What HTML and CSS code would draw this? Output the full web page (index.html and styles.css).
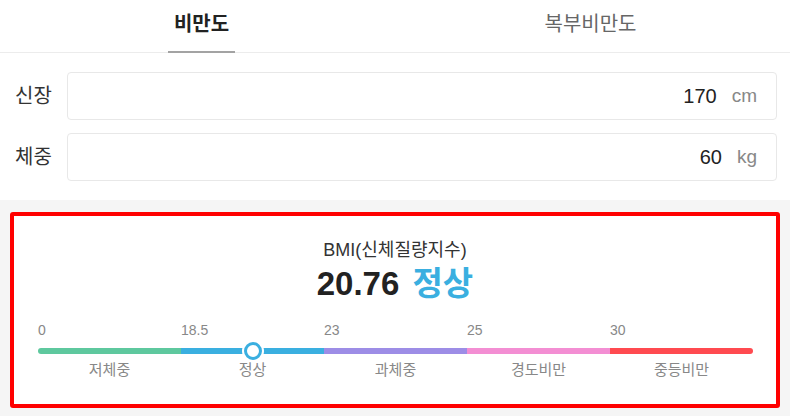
FILE: index.html
```html
<!DOCTYPE html>
<html lang="ko">
<head>
  <meta charset="UTF-8">
  <title>비만도 계산기</title>
  <link rel="stylesheet" href="styles.css">
</head>
<body>
  <div class="tabs">
    <div class="tab active"><span>비만도</span></div>
    <div class="tab"><span>복부비만도</span></div>
  </div>

  <div class="form">
    <div class="field">
      <label for="height">신장</label>
      <div class="input-box">
        <span class="value" id="height">170</span>
        <span class="unit">cm</span>
      </div>
    </div>
    <div class="field">
      <label for="weight">체중</label>
      <div class="input-box">
        <span class="value" id="weight">60</span>
        <span class="unit">kg</span>
      </div>
    </div>
  </div>

  <div class="result-area">
    <div class="result-card">
      <div class="result-title">BMI(신체질량지수)</div>
      <div class="result-value">20.76 <span class="grade">정상</span></div>

      <div class="scale">
        <div class="ticks">
          <span>0</span>
          <span>18.5</span>
          <span>23</span>
          <span>25</span>
          <span>30</span>
        </div>
        <div class="bar">
          <div class="seg under"></div>
          <div class="seg normal"></div>
          <div class="seg over"></div>
          <div class="seg obese1"></div>
          <div class="seg obese2"></div>
          <!-- marker: 20.76 → (1 + 2.26/4.5) / 5 -->
          <div class="marker" style="left: 30.04%"></div>
        </div>
        <div class="grades">
          <span>저체중</span>
          <span>정상</span>
          <span>과체중</span>
          <span>경도비만</span>
          <span>중등비만</span>
        </div>
      </div>
    </div>
  </div>
</body>
</html>
```

FILE: styles.css
```css
body {
  margin: 0;
  font-family: "Liberation Sans", "Noto Sans CJK KR", sans-serif;
  color: #333;
  background: #fff;
  width: 790px;
  height: 416px;
  overflow: hidden;
}

/* TABS */
.tabs {
  display: flex;
  height: 52px;
  border-bottom: 1px solid #ececec;
  padding: 0 5px 0 7px;
}

.tab {
  flex: 1;
  display: flex;
  justify-content: center;
}

.tab span {
  display: block;
  padding: 0 6px;
  font-size: 20px;
  line-height: 49px;
  color: #666;
  border-bottom: 2px solid transparent;
  margin-bottom: -1px;
  white-space: nowrap;
}

.tab.active span {
  color: #222;
  font-weight: bold;
  border-bottom-color: #a3a3a3;
}

/* FORM */
.form {
  padding: 19px 13px 19px 15px;
  display: flex;
  flex-direction: column;
  gap: 13px;
}

.field {
  display: flex;
  align-items: center;
  gap: 12px;
}

.field label {
  flex: 0 0 40px;
  white-space: nowrap;
  font-size: 20px;
  line-height: 24px;
  color: #333;
}

.input-box {
  flex: 1;
  height: 46px;
  border: 1px solid #e8e8e8;
  border-radius: 4px;
  display: flex;
  align-items: center;
  justify-content: flex-end;
  gap: 15px;
  padding-right: 19px;
}

.input-box .value {
  font-size: 20px;
  color: #222;
}

.input-box .unit {
  font-size: 19px;
  color: #888;
}

/* RESULT */
.result-area {
  background: #f5f5f5;
  padding: 12px 10px 8px;
}

.result-card {
  background: #fff;
  border: 4px solid #ff0000;
  border-radius: 3px;
  padding: 22px 0 24px;
  text-align: center;
}

.result-title {
  font-size: 18px;
  line-height: 24px;
  color: #333;
}

.result-value {
  margin-top: 2px;
  font-size: 33px;
  line-height: 40px;
  font-weight: bold;
  color: #222;
}

.result-value .grade {
  color: #3aafe0;
  margin-left: 4px;
}

.scale {
  margin-top: 18px;
  padding: 0 23px 0 24px;
}

.ticks,
.grades {
  display: grid;
  grid-template-columns: repeat(5, 1fr);
}

.ticks span {
  text-align: left;
  font-size: 14px;
  line-height: 16px;
  color: #888;
}

.grades {
  margin-top: 6px;
}

.grades span {
  font-size: 15px;
  line-height: 20px;
  color: #888;
}

.bar {
  position: relative;
  display: flex;
  height: 6px;
  margin-top: 10px;
  border-radius: 3px;
}

.seg {
  flex: 1;
}

.seg.under {
  background: #5ec89e;
  border-radius: 3px 0 0 3px;
}
.seg.normal {
  background: #3aafe0;
}
.seg.over {
  background: #9d8de6;
}
.seg.obese1 {
  background: #f38ed3;
}
.seg.obese2 {
  background: #ff4a50;
  border-radius: 0 3px 3px 0;
}

/* current value pin */
.marker {
  position: absolute;
  top: 50%;
  width: 12px;
  height: 12px;
  border: 3px solid #3aafe0;
  border-radius: 50%;
  background: #fff;
  box-shadow: 0 0 0 2px #fff;
  transform: translate(-50%, -50%);
}
```
